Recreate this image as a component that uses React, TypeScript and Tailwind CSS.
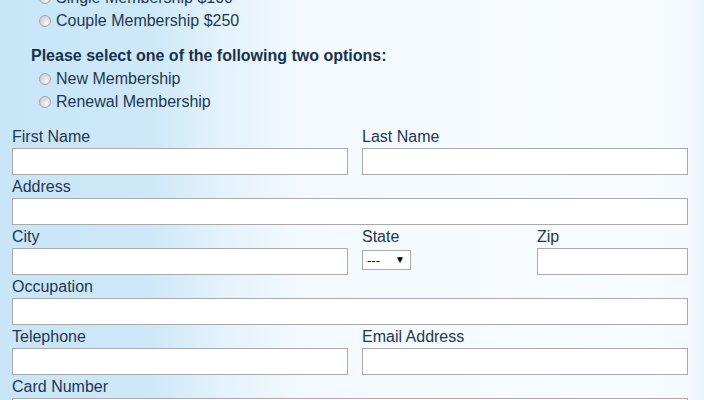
import React from "react";

const Radio = ({ label }: { label: string }) => (
  <div className="flex h-[23px] items-center pl-[39px]">
    <span className="mr-[5px] h-[12px] w-[12px] rounded-full border border-[#a5a5a5] bg-radial-[at_65%_70%] from-[#fafafa] via-[#dcdcdc] to-[#c9c9c9]"></span>
    <span>{label}</span>
  </div>
);

const Field = ({ label, className = "" }: { label: string; className?: string }) => (
  <div className={`flex flex-col ${className}`}>
    <div className="h-[23px] leading-[23px]">{label}</div>
    <div className="h-[27px] w-full border border-[#a9a9a9] bg-white"></div>
  </div>
);

export default function App() {
  return (
    <div className="h-[400px] w-[704px] overflow-hidden bg-[linear-gradient(to_right,#c8e6f8_0px,#cde8f8_150px,#e3f2fc_220px,#f3f9fe_300px,#f8fcfe_640px,#f3f9fd_690px,#e8f3fb_704px)] font-['Liberation_Sans',Arial,sans-serif] text-[16px] text-[#1e3752]">
      <div className="-mt-[14px]">
        <Radio label="Single Membership $100" />
        <Radio label="Couple Membership $250" />

        <div className="mt-[12px] h-[23px] pl-[31px] font-bold leading-[23px] text-[#17314e]">
          Please select one of the following two options:
        </div>
        <Radio label="New Membership" />
        <Radio label="Renewal Membership" />

        <div className="mt-[12px] flex flex-col pl-[12px] pr-[16px]">
          <div className="flex gap-[14px]">
            <Field label="First Name" className="w-[336px]" />
            <Field label="Last Name" className="flex-1" />
          </div>
          <Field label="Address" />
          <div className="flex">
            <Field label="City" className="w-[336px]" />
            <div className="ml-[14px] flex w-[175px] flex-col">
              <div className="h-[23px] leading-[23px]">State</div>
              <div className="mt-[2px] flex h-[20px] w-[49px] items-center justify-between border border-[#a9a9a9] bg-white pl-[4px] pr-[5px] text-[13px] leading-none text-black">
                <span>---</span>
                <span className="text-[10px]">▼</span>
              </div>
            </div>
            <Field label="Zip" className="flex-1" />
          </div>
          <Field label="Occupation" />
          <div className="flex gap-[14px]">
            <Field label="Telephone" className="w-[336px]" />
            <Field label="Email Address" className="flex-1" />
          </div>
          <Field label="Card Number" />
        </div>
      </div>
    </div>
  );
}
